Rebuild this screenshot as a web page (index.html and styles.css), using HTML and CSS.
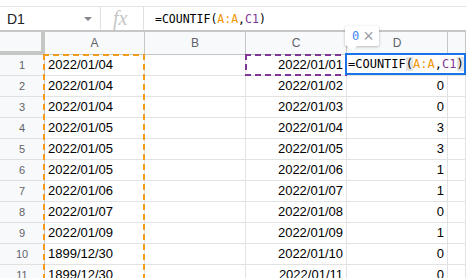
FILE: index.html
```html
<!DOCTYPE html>
<html lang="en">
<head>
    <meta charset="UTF-8">
    <title>Sheet - COUNTIF</title>
    <link rel="stylesheet" href="styles.css">
</head>
<body>
    <div class="sheet">
        <div class="top-edge"></div>

        <div class="formula-bar">
            <div class="name-box">
                <span class="cell-ref">D1</span>
                <span class="caret"></span>
            </div>
            <div class="fx">fx</div>
            <div class="formula">=COUNTIF(<span class="ref-a">A:A</span>,<span class="ref-c">C1</span>)</div>
        </div>

        <div class="grid">
            <div class="row head">
                <div class="corner"></div>
                <div class="col-head">A</div>
                <div class="col-head">B</div>
                <div class="col-head">C</div>
                <div class="col-head">D</div>
                <div class="col-head"></div>
            </div>
            <div class="row">
                <div class="row-head">1</div>
                <div class="cell">2022/01/04</div>
                <div class="cell"></div>
                <div class="cell num">2022/01/01</div>
                <div class="cell num"></div>
                <div class="cell"></div>
            </div>
            <div class="row">
                <div class="row-head">2</div>
                <div class="cell">2022/01/04</div>
                <div class="cell"></div>
                <div class="cell num">2022/01/02</div>
                <div class="cell num">0</div>
                <div class="cell"></div>
            </div>
            <div class="row">
                <div class="row-head">3</div>
                <div class="cell">2022/01/04</div>
                <div class="cell"></div>
                <div class="cell num">2022/01/03</div>
                <div class="cell num">0</div>
                <div class="cell"></div>
            </div>
            <div class="row">
                <div class="row-head">4</div>
                <div class="cell">2022/01/05</div>
                <div class="cell"></div>
                <div class="cell num">2022/01/04</div>
                <div class="cell num">3</div>
                <div class="cell"></div>
            </div>
            <div class="row">
                <div class="row-head">5</div>
                <div class="cell">2022/01/05</div>
                <div class="cell"></div>
                <div class="cell num">2022/01/05</div>
                <div class="cell num">3</div>
                <div class="cell"></div>
            </div>
            <div class="row">
                <div class="row-head">6</div>
                <div class="cell">2022/01/05</div>
                <div class="cell"></div>
                <div class="cell num">2022/01/06</div>
                <div class="cell num">1</div>
                <div class="cell"></div>
            </div>
            <div class="row">
                <div class="row-head">7</div>
                <div class="cell">2022/01/06</div>
                <div class="cell"></div>
                <div class="cell num">2022/01/07</div>
                <div class="cell num">1</div>
                <div class="cell"></div>
            </div>
            <div class="row">
                <div class="row-head">8</div>
                <div class="cell">2022/01/07</div>
                <div class="cell"></div>
                <div class="cell num">2022/01/08</div>
                <div class="cell num">0</div>
                <div class="cell"></div>
            </div>
            <div class="row">
                <div class="row-head">9</div>
                <div class="cell">2022/01/09</div>
                <div class="cell"></div>
                <div class="cell num">2022/01/09</div>
                <div class="cell num">1</div>
                <div class="cell"></div>
            </div>
            <div class="row">
                <div class="row-head">10</div>
                <div class="cell">1899/12/30</div>
                <div class="cell"></div>
                <div class="cell num">2022/01/10</div>
                <div class="cell num">0</div>
                <div class="cell"></div>
            </div>
            <div class="row">
                <div class="row-head">11</div>
                <div class="cell">1899/12/30</div>
                <div class="cell"></div>
                <div class="cell num">2022/01/11</div>
                <div class="cell num">0</div>
                <div class="cell"></div>
            </div>
        </div>

        <!-- copy range around column A, reference box on C1 -->
        <div class="copy-range"></div>
        <div class="ref-range"></div>

        <div class="editor"><span class="paren">=COUNTIF(</span><span class="ref-a">A:A</span>,<span class="ref-c">C1</span><span class="paren">)</span></div>

        <div class="preview">
            <span class="preview-value">0</span>
            <span class="preview-close">&times;</span>
        </div>
    </div>
</body>
</html>
```

FILE: styles.css
```css
* {
    margin: 0;
    padding: 0;
    box-sizing: border-box;
}

body {
    width: 466px;
    height: 278px;
    overflow: hidden;
    background: #fff;
    font-family: "Liberation Sans", Arial, sans-serif;
}

.sheet {
    position: relative;
    width: 466px;
    height: 278px;
    overflow: hidden;
}

.top-edge {
    height: 7px;
    border-bottom: 1px solid #e3e3e3;
}

/* formula bar */

.formula-bar {
    display: flex;
    align-items: center;
    height: 25px;
    border-bottom: 2px solid #c7c7c7;
}

.name-box {
    display: flex;
    align-items: center;
    justify-content: space-between;
    width: 101px;
    height: 100%;
    padding: 0 8px 0 7px;
    border-right: 1px solid #e0e0e0;
}

.cell-ref {
    font-size: 14px;
    color: #202124;
}

.caret {
    width: 0;
    height: 0;
    border-left: 4px solid transparent;
    border-right: 4px solid transparent;
    border-top: 4px solid #80868b;
}

.fx {
    width: 43px;
    height: 100%;
    padding-left: 12px;
    border-right: 1px solid #e0e0e0;
    font-family: "Liberation Serif", serif;
    font-style: italic;
    font-size: 20px;
    line-height: 23px;
    color: #c6c6c6;
}

.formula {
    padding-left: 11px;
    font-family: "DejaVu Sans Mono", monospace;
    font-size: 11.5px;
    color: #000;
}

.ref-a {
    color: #f09300;
}

.ref-c {
    color: #7e3794;
}

/* grid */

.row {
    display: grid;
    grid-template-columns: 45px 100px 101px 101px 101px 1fr;
    height: 21px;
}

.row.head {
    height: 23px;
}

.corner {
    background: #f8f9fa;
    border-right: 4px solid #c4c7c5;
    border-bottom: 4px solid #c4c7c5;
}

.col-head {
    background: #f8f9fa;
    border-right: 1px solid #c4c7c5;
    border-bottom: 1px solid #c4c7c5;
    text-align: center;
    font-size: 12px;
    line-height: 22px;
    color: #5f6368;
}

.row-head {
    background: #f8f9fa;
    border-right: 1px solid #c4c7c5;
    border-bottom: 1px solid #e0e0e0;
    text-align: center;
    font-size: 11px;
    line-height: 20px;
    color: #5f6368;
}

.cell {
    border-right: 1px solid #e2e3e3;
    border-bottom: 1px solid #e2e3e3;
    padding: 0 3px;
    font-size: 13px;
    line-height: 20px;
    color: #000;
    white-space: nowrap;
    overflow: hidden;
}

.num {
    text-align: right;
}

/* overlays */

.copy-range,
.ref-range {
    position: absolute;
    background-repeat: no-repeat;
}

.copy-range {
    left: 43px;
    top: 54px;
    width: 102px;
    height: 260px;
    background-image:
        repeating-linear-gradient(90deg, #f29b1d 0 6px, transparent 6px 10px),
        repeating-linear-gradient(180deg, #f29b1d 0 6px, transparent 6px 10px),
        repeating-linear-gradient(180deg, #f29b1d 0 6px, transparent 6px 10px);
    background-size: 100% 2px, 2px 100%, 2px 100%;
    background-position: left top, left top, right top;
}

.ref-range {
    left: 245px;
    top: 54px;
    width: 102px;
    height: 22px;
    background-image:
        repeating-linear-gradient(90deg, #7e3794 0 6px, transparent 6px 10px),
        repeating-linear-gradient(90deg, #7e3794 0 6px, transparent 6px 10px),
        repeating-linear-gradient(180deg, #7e3794 0 6px, transparent 6px 10px);
    background-size: 100% 2px, 100% 2px, 2px 100%;
    background-position: left top, left bottom, left top;
}

.editor {
    position: absolute;
    left: 345px;
    top: 53px;
    width: 121px;
    height: 22px;
    padding-left: 1px;
    border: 2px solid #1a73e8;
    background: #fff;
    font-family: "DejaVu Sans Mono", monospace;
    font-size: 12px;
    line-height: 18px;
    color: #000;
    white-space: nowrap;
}

.editor .paren {
    background: linear-gradient(#e3e3e3, #e3e3e3) right / 7px 100% no-repeat;
}

.preview {
    position: absolute;
    left: 345px;
    top: 26px;
    width: 34px;
    height: 20px;
    display: flex;
    align-items: center;
    gap: 4px;
    padding-left: 7px;
    background: #fff;
    border-radius: 2px;
    box-shadow: 0 1px 3px rgba(60, 64, 67, 0.35);
}

.preview::after {
    content: "";
    position: absolute;
    left: 2px;
    bottom: -5px;
    border-left: 5px solid transparent;
    border-right: 5px solid transparent;
    border-top: 5px solid #fff;
}

.preview-value {
    font-family: "DejaVu Sans Mono", monospace;
    font-size: 12px;
    color: #4285f4;
}

.preview-close {
    font-size: 18px;
    line-height: 16px;
    color: #9aa0a6;
}
```
